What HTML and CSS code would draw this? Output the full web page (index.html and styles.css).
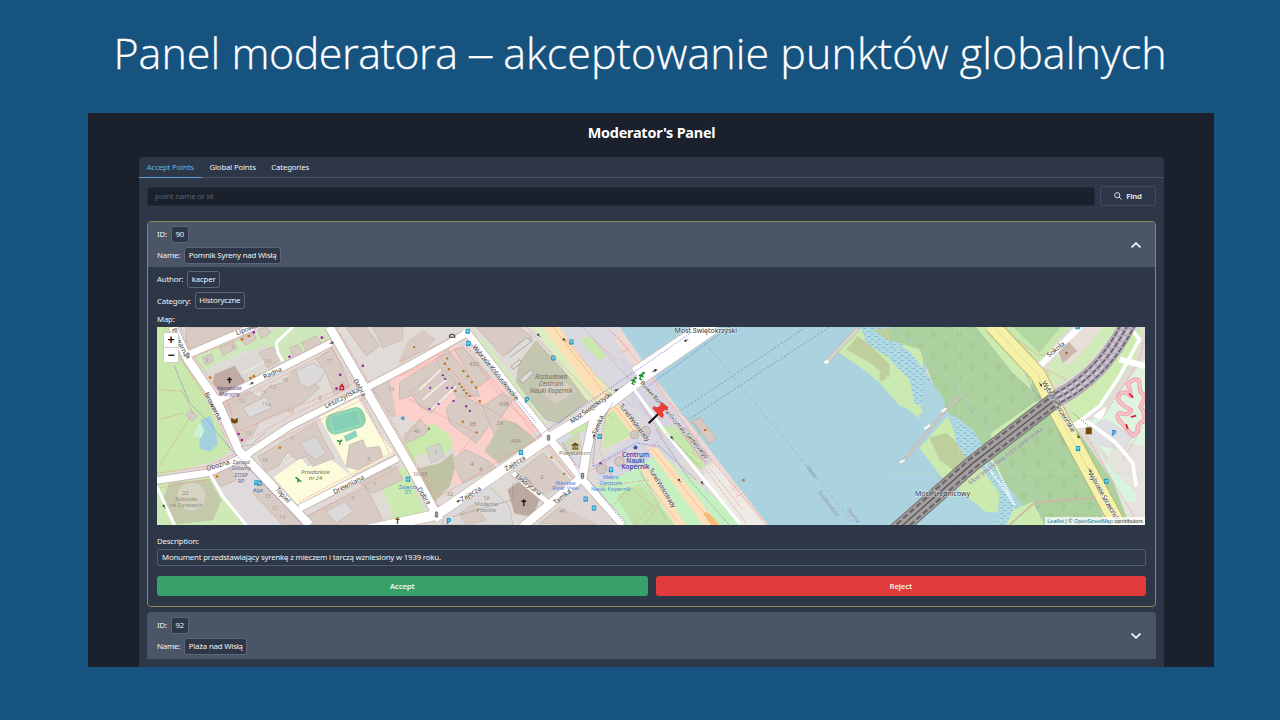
FILE: index.html
```html
<!DOCTYPE html>
<html lang="pl">
<head>
<meta charset="utf-8">
<title>Panel moderatora</title>
<link rel="stylesheet" href="styles.css">
</head>
<body>
<main class="slide">
  <h1 class="slide-title">Panel <span class="tight">moderatora</span><span class="dash">–</span>akceptowanie punktów globalnych</h1>
  <section class="app">
    <h2 class="app-title">Moderator's Panel</h2>
    <div class="card">
      <nav class="tabs">
        <a class="tab tab-active">Accept Points</a>
        <a class="tab">Global Points</a>
        <a class="tab">Categories</a>
      </nav>
      <div class="search">
        <div class="search-input">point name or id</div>
        <div class="search-btn">
          <svg width="8" height="8" viewBox="0 0 16 16" fill="none" stroke="#edf2f7" stroke-width="1.8"><circle cx="6.5" cy="6.5" r="5.2"/><path d="M10.3 10.3L15.3 15.3"/></svg>
          Find
        </div>
      </div>
      <article class="item item-open">
        <header class="item-head">
          <div class="fields">
            <div class="field"><span class="label">ID:</span><span class="tag">90</span></div>
            <div class="field"><span class="label">Name:</span><span class="tag">Pomnik Syreny nad Wisłą</span></div>
          </div>
          <svg class="chev" width="10" height="6" viewBox="0 0 10 6" fill="none" stroke="#fff" stroke-width="1.6"><path d="M.6 5.3L5 1.2L9.4 5.3"/></svg>
        </header>
        <div class="item-body">
          <div class="field"><span class="label label-up">Author:</span><span class="tag">kacper</span></div>
          <div class="field"><span class="label">Category:</span><span class="tag">Historyczne</span></div>
          <div class="map-label label">Map:</div>
          <div class="map">
            <svg class="map-svg" viewBox="22.5 23 2964 592" preserveAspectRatio="none">
              <defs>
                <pattern id="trees" width="78" height="64" patternUnits="userSpaceOnUse"><path d="M14 18a6 7 0 1 1 .1 0v9M54 50a6 7 0 1 1 .1 0v9" fill="none" stroke="#8dbb80" stroke-width="2"/></pattern>
                <pattern id="reeds" width="22" height="16" patternUnits="userSpaceOnUse"><rect width="22" height="16" fill="#b4dbe0"/><path d="M1 4h11M11 12h10" stroke="#6cb2de" stroke-width="2.5"/></pattern>
                <g id="bus"><rect width="13" height="15" rx="2" fill="#0c92c4"/><path d="M3 4h7v4H3zM4 11h5" stroke="#fff" stroke-width="1.5" fill="none"/></g>
                <g id="gate"><rect x="-5" y="-9" width="10" height="18" rx="4" fill="#777"/><path d="M-2-4h4M-2 0h4M-2 4h4" stroke="#ddd" stroke-width="2"/></g>
                <path id="arr" d="M-7 0H5M1-3L6 0L1 3z" stroke="#444" stroke-width="2" fill="#444"/>
              </defs>
              <rect x="0" y="0" width="3010" height="640" fill="#e1dbd8"/>

              <!-- west land use -->
              <g>
                <path d="M22 23H65L125 145L245 395L190 425L22 470Z" fill="#c8e8ae"/>
                <path d="M22 480L175 462L290 615H22Z" fill="#cde9b6"/>
                <path d="M60 490L178 478L215 540L190 600L80 612L40 540Z" fill="#c4c9aa" stroke="#b9b89d"/>
                <circle cx="125" cy="530" r="44" fill="#d5d3c2" stroke="#bcb9a5"/>
                <path d="M135 110L300 45L420 23H525L540 60L395 128L300 90L160 155Z" fill="#cfe8bb"/>
                <path d="M240 135L350 75L400 125L360 150L240 205L175 165Z" fill="#dcd8d3"/>
                <path d="M150 385C148 350 166 322 152 302L182 288Q202 330 204 375L180 396Z" fill="#a4cfdc"/>
                <path d="M130 350L150 310L165 330L155 355Z" fill="#ccf0d8"/>
                <path d="M110 285L125 273L142 289L127 305Z" fill="#d6cfd2" stroke="#b5a8b0" stroke-width="2"/>
                <path d="M510 292L625 235L690 345L735 400L605 468Z" fill="#fcfbdc"/>
                <path d="M372 472L455 415L475 440L535 415L560 430L610 470L448 558Z" fill="#fcfbdc"/>
                <path d="M690 482L780 432L810 600L740 615Z" fill="#cdebb0"/>
                <path d="M180 470L290 420L480 615H290Z" fill="#dfdbdd"/>
                <g fill="none" stroke="#fff" stroke-width="2" opacity=".9"><path d="M260 170L340 130L360 90M210 280L440 170M240 320L480 220M380 390L410 430L460 400"/></g>
                <g fill="#d7cbc3" stroke="#bfb2a9" stroke-width="2">
                  <path d="M110 23L110 80L125 95L270 35L265 23Z"/>
                  <path d="M210 85L250 65L262 85L222 108ZM275 55L310 38L320 60L286 78ZM325 30L350 23L365 40L335 58Z"/>
                  <path d="M420 85L445 75L460 100L432 115ZM455 70L500 50L515 72L470 95Z"/>
                  <path d="M160 115L185 103L193 125L170 137ZM330 100L370 82L395 120L355 145Z"/>
                  <path d="M195 165L255 140L285 185L280 210L215 225L190 190Z" fill="#c0aca3"/>
                  <path d="M215 250L300 215L330 235L360 200L400 190L435 150L480 180L510 205L460 250L330 305L310 345L280 365L250 320Z"/>
                  <path d="M440 155L490 130L530 150L510 185L475 205L450 190Z" fill="#dbd9da"/>
                  <path d="M500 120L550 85L590 170L600 200L555 225L525 150Z"/>
                  <path d="M280 265L350 230L365 265L300 295Z" fill="#dddadb"/>
                  <path d="M325 410L370 385L400 365L500 310L525 365L555 415L490 440L470 410L440 420L415 395L385 440L350 455Z"/>
                  <path d="M450 370L500 350L530 400L500 420L470 400Z" fill="#d7d6d6"/>
                  <path d="M600 375L640 360L650 385L690 380L700 410L625 450L590 440Z"/>
                  <path d="M590 25L650 23L690 80L650 110ZM670 23H760V60L700 85Z"/>
                  <path d="M660 195L760 150L810 240L780 285L725 290Z"/>
                  <path d="M185 460L240 440L260 480L215 500ZM330 490L360 480L480 615H400L310 520Z"/>
                  <path d="M470 590L650 500L700 600L680 615H480ZM630 490L700 450L740 440L760 480L670 520Z"/>
                  <path d="M530 575L585 545L610 575L560 610Z" fill="#dbd9da"/>
                </g>
                <g transform="rotate(-16 587 303)"><rect x="528" y="272" width="120" height="64" rx="26" fill="#8fd0ab"/><rect x="545" y="280" width="86" height="48" fill="#85cfb4" stroke="#a8dfcc" stroke-width="2"/></g>
                <path d="M583 350L618 332L625 350L590 366Z" fill="#8bd3b8"/>
              </g>

              <!-- science centre quarter -->
              <g transform="translate(750 0)">
                <path d="M-30 170L145 85L180 75L260 175L300 180L340 235L410 330L370 380L255 395L300 430L160 500L150 455L180 425L150 360L60 310L-10 290Z" fill="#fbcfca"/>
                <path d="M10 360L100 310L150 345L160 380L120 420L60 400L40 440Z" fill="#cae9ad"/>
                <path d="M0 120L25 65L70 30L110 60L80 90L0 135Z" fill="#d7cbc3"/>
                <path d="M-10 490L40 500L85 590L0 612H-30Z" fill="#cbeaae"/>
                <g fill="#d7cbc3" stroke="#bfb2a9" stroke-width="2">
                  <path d="M0 190L60 150L130 115L160 150L100 180L30 230L0 240Z"/>
                  <path d="M110 120L145 90L220 180L240 230L170 230Z"/><path d="M165 90L190 85L275 175L230 205Z"/>
                  <path d="M30 215L130 150L170 190L95 280L60 260Z"/><path d="M140 265L185 225L260 265L275 310L230 370L150 310Z"/>
                  <path d="M15 345L60 300L90 325L75 345L20 370Z"/><path d="M150 425L200 390L270 425L290 445L190 490L170 450Z"/>
                  <path d="M250 260L310 220L340 240L300 300L340 330L330 350L290 360Z"/>
                  <path d="M230 23H360L400 55L310 110Z"/><path d="M350 460L430 400L520 490L460 545Z"/>
                  <path d="M120 560L260 490L330 560L340 615H130Z" fill="#dbd9d9"/>
                  <path d="M325 510L380 470L425 525L400 590L345 580Z" fill="#bba99f"/>
                  <path d="M420 610L520 530L590 615Z"/><path d="M180 580L220 555L260 600L200 615Z"/>
                </g>
                <path d="M40 450L120 430L160 400L165 450L150 500L100 550Z" fill="#bfc3a4"/>
                <path d="M80 385L120 370L135 410L95 430Z" fill="#d4d2cc" stroke="#aaa"/>
                <path d="M360 130L410 65L570 240L480 310L440 300L350 195Z" fill="#c5c6af" stroke="#afb09a" stroke-width="2"/>
                <path d="M255 395L310 300L350 310L410 360L300 432Z" fill="#c5c6af"/>
                <path d="M415 210L440 185L500 190L530 215L470 255Z" fill="#d5cdc2"/>
                <path d="M220 55L255 60L440 310L420 330L330 215L250 110Z" fill="#d3eabf"/>
                <path d="M490 23H640L780 160V330L560 240Z" fill="#dbd9e0"/>
                <path d="M400 23H460L650 230L640 265L560 240Z" fill="#dcedc0"/>
                <path d="M430 23H478L720 345L690 380Z" fill="#fae0b4"/>
                <path d="M540 60L570 50L620 110L600 125Z" fill="#c8e8ad"/>
                <path d="M460 350L600 270L570 400L545 440Z" fill="#d8dce6"/>
                <path d="M500 340L590 285L590 310L530 350Z" fill="#c8e8ad"/>
                <path d="M485 370L540 335L550 400L500 400Z" fill="#d3d5bd"/>
                <path d="M615 290L660 260L710 340L610 390Z" fill="#c8e8ad"/>
                <path d="M580 440L720 330L840 250L870 400L780 460L600 500Z" fill="#d8d6e1"/>
                <path d="M625 250L665 260L720 335L700 350Z" fill="#fae0b4"/>
                <path d="M560 510L680 460L780 400L1050 615H660Z" fill="#c4f0c2"/>
                <path d="M650 530L720 490L830 615H700Z" fill="#c1e3aa"/>
                <path d="M420 530L540 480L650 615H600Z" fill="#ded6d4"/>
                <path d="M320 105L380 55L398 65L330 115M335 140L360 120L365 130L340 150ZM360 180L395 150L403 160L370 192Z" fill="#dcdcd8" stroke="#9b8f89" stroke-width="2"/>
                <g stroke="#f5f0ec" stroke-width="5" fill="none"><path d="M60 210L125 150M70 240L140 180M95 270L170 200"/></g>
                <g fill="#d3c7c2" stroke="#a99ea3" stroke-width="2"><circle cx="660" cy="425" r="14"/><circle cx="705" cy="345" r="12"/><circle cx="738" cy="335" r="15"/><circle cx="606" cy="447" r="15"/></g>
              </g>

              <!-- river and east bank -->
              <g transform="translate(1470 0)">
                <path d="M-60 23H860V615H385L50 180Z" fill="#aad3df"/>
                <path d="M640 200H1050V615H380V500Z" fill="#aad3df"/>
                <path d="M-60 23L-75 60L30 210L215 430L370 615H385L40 178Z" fill="#efd9d4"/>
                <path d="M-60 110L20 160L220 420L190 440L60 330L-20 260Z" fill="#d6d4e0"/>
                <path d="M50 320L110 320L200 440L175 445Z" fill="#c6e8ac"/>
                <path d="M120 330L140 325L205 410L190 420Z" fill="#d9cdc8" stroke="#b9adb0" stroke-width="2"/>
                <path d="M200 435L225 430L375 615H300L190 480Z" fill="#eeeae6"/>
                <path d="M160 305L182 293L230 355L208 372Z" fill="#d7c9c1" stroke="#b8aaa2" stroke-width="2"/>
                <path d="M20 380L55 385L240 615H190Z" fill="#fce0b8"/>
                <path d="M0 440L30 445L140 615H105Z" fill="#fce0b8"/>
                <path d="M190 580Q205 565 240 615H215Z" fill="#f8bd70"/>
                <path d="M650 30L785 23H850V285L780 258L720 190Q650 130 585 92Z" fill="#cbeab1"/>
                <path d="M665 25H760L790 60V105L740 110L680 70Z" fill="url(#reeds)"/>
                <path d="M620 90L655 50L700 85L745 130L780 150L750 175L690 130ZM720 160L740 150L740 180L720 185ZM700 30L790 23V70L740 60Z" fill="#becf9d"/>
                <path d="M553 128L650 25L660 30L565 132Z" fill="#d9d3ce" stroke="#bdb3ad" stroke-width="2"/><path d="M552 128L562 121L570 127L560 134Z" fill="#fff"/>
                <g fill="none" stroke-dasharray="7 5"><path d="M500 23L125 272M570 23L150 297" stroke="#98a4a0" stroke-width="3"/><path d="M175 45L640 605" stroke="#8fb4c6" stroke-width="2" stroke-dasharray="16 8"/></g>
                <path d="M200 23V615M0 460H780M500 23V300" stroke="#b8dae4" stroke-width="1"/>
              </g>
              <g transform="translate(2220 0)">
                <path d="M0 23H300L500 240L760 615H350L300 430L190 290L160 265L90 90L0 60Z" fill="#add19e"/>
                <path d="M0 23H300L500 240L350 370L190 290L90 90L0 60ZM340 400L500 270L680 615H430Z" fill="url(#trees)"/>
                <path d="M0 75L55 90L165 240L165 262L185 290L90 385L100 290L75 160Z" fill="#acd5df"/>
                <path d="M0 100Q90 150 95 220L88 296L0 225Z" fill="#cbeab1"/>
                <path d="M0 78L60 95L125 180L100 190L100 260L75 250L60 180L0 120Z" fill="url(#reeds)"/>
                <path d="M185 285L215 300L285 400L300 430L400 555L360 615H20L160 470L90 385Z" fill="#acd5df"/>
                <path d="M175 290L195 340L250 410L330 520L325 575Q290 585 270 560L155 470L90 385Z" fill="#cdeaae"/>
                <path d="M120 355L170 340L200 365L240 430L190 450L150 420Z" fill="#bfce9d"/>
                <path d="M190 290L250 330L285 385L240 430L200 370ZM280 440L300 430L380 550L350 615H320L335 520Z" fill="url(#reeds)"/>
                <path d="M305 340L440 245L470 250L370 330L305 370Z" fill="#cdebb0"/>
                <path d="M260 23H315L430 150L425 210L370 160Z" fill="#cdebb0"/>
                <path d="M350 615L370 570L430 545L465 615Z" fill="#cdebb0"/>
                <path d="M315 23H540L450 130Z" fill="#c9e8b0"/><path d="M370 23H515L450 100Z" fill="#b2d8a2"/>
                <path d="M540 50L620 23H690L580 150L500 200L465 160Z" fill="#d1eab9"/>
                <path d="M550 23H640L600 75L535 140L500 105Z" fill="#e8dfd9"/><path d="M505 90L535 65L562 95L520 130Z" fill="#c9b8ae" stroke="#b7a69d"/>
                <path d="M520 220L690 60L760 23L740 110L640 260L550 310Z" fill="#ceebb1"/>
                <path d="M650 270L770 110V450L740 510L580 320Z" fill="#def4e0"/>
                <path d="M680 360L770 380V615H720L650 430Z" fill="#e6e2dc"/><path d="M590 325L650 300L730 350L700 390L630 375Z" fill="#dfdfe3" stroke="#bbb"/>
                <path d="M590 320L650 430L740 520V545H700Z" fill="#d8f3df"/>
                <path d="M605 495L620 490L700 615H650Z" fill="#d7d6e3"/><path d="M610 290L650 260L640 300Z" fill="#fff"/>
                <path d="M210 23V615M0 460H760" stroke="#c4ddbb" stroke-width="1"/>
                <path d="M0 23L80 75L220 230L300 340L305 365L350 430L430 520L465 615" fill="none" stroke="#a9c9d6" stroke-width="4" stroke-dasharray="5 4"/>
                <g fill="none"><path d="M38 427L170 270L215 228" stroke="#bfb2ab" stroke-width="8"/><path d="M38 427L170 270L215 228" stroke="#d9cfca" stroke-width="4"/></g>
                <path d="M33 427L43 423M158 275L168 268M107 326L120 317" stroke="#fff" stroke-width="6" stroke-linecap="round"/>
                <path d="M360 615L435 548L650 530" fill="none" stroke="#cdb6a6" stroke-width="5"/>
                <path d="M285 395L320 440L375 555L345 510L290 435" fill="none" stroke="#fff" stroke-width="6" stroke-dasharray="4 3"/>
                <path d="M730 348L698 312Q675 292 690 280Q720 290 725 272Q705 262 688 245Q680 215 712 220L722 228Q725 210 715 195Q730 175 748 182L752 215Q765 225 764 240L752 262Q770 280 762 305Q740 315 745 335Z" fill="none" stroke="#f3a6b2" stroke-width="13" stroke-linejoin="round"/>
                <path d="M730 348L698 312Q675 292 690 280Q720 290 725 272Q705 262 688 245Q680 215 712 220L722 228Q725 210 715 195Q730 175 748 182L752 215Q765 225 764 240L752 262Q770 280 762 305Q740 315 745 335Z" fill="none" stroke="#f8c4cc" stroke-width="6" stroke-linejoin="round"/>
              </g>

              <!-- streets: casing then fill -->
              <g fill="none" stroke="#c9b9b2" stroke-linejoin="round">
                <path d="M70 23L115 120L205 250L270 395L480 615M540 23L640 195L780 435L870 600" stroke-width="31"/>
                <path d="M22 482L180 458L280 412L420 320L650 205L790 132L945 45M105 110L310 23M190 250L545 70M450 565L745 415" stroke-width="26"/>
                <path d="M650 630L860 585L1030 470L1190 360L1380 250L1500 160L1700 23" stroke-width="34"/>
                <path d="M1460 165L1690 10" stroke-width="50"/>
                <path d="M945 30L1195 350L1300 480L1420 615" stroke-width="27"/><path d="M1380 245L1330 310L1310 400L1300 470L1120 620" stroke-width="30"/><path d="M1090 460L1210 560" stroke-width="20"/>
              </g>
              <g fill="none" stroke="#f08c83" stroke-width="2.2" stroke-dasharray="5 4">
                <path d="M92 23L140 120L235 250L275 365M45 23L100 130L190 265L245 395M22 460L170 440L260 400M22 505L185 478M230 350L640 180M300 400L660 230M450 545L735 395M470 590L750 440M560 23L660 190L800 430L880 580M520 50L620 200L720 400M30 210L100 215L130 280L60 390L30 440M100 280L30 300M120 115L310 45M200 275L540 95M280 370L420 290L600 205"/>
                <g transform="translate(750 0)"><path d="M0 170L190 80L320 250L430 345L120 530L0 380M0 125L150 60M200 80L430 375L545 500M30 240L230 340L180 400M70 290L0 380M110 100L240 250L400 350M380 23L540 190L640 300M460 23L700 330M500 60L590 170L700 260M550 23L690 180M580 60L650 120M430 360L530 490M560 460L680 390L720 450L800 600M600 500L750 480M640 560L690 500L760 560L700 615M620 280L600 390L640 480M720 250L790 350L690 450M640 40L780 200M620 23L690 90L660 100"/></g>
                <g transform="translate(1470 0)"><path d="M40 180L215 420L370 600M10 190L150 370L310 570M40 390L210 600M0 460L110 600M0 480L60 550L20 610M200 450L320 610M270 500L300 530M90 250L180 330L160 400L220 440M290 530L310 520M280 510L290 495"/></g>
                <g transform="translate(2220 0)"><path d="M530 180L470 150L480 170M700 420L760 320M630 310L745 130L765 60M330 23L450 110L500 90L560 23M590 350L740 600"/></g>
              </g>
              <g fill="none" stroke="#fff" stroke-linejoin="round">
                <path d="M70 23L115 120L205 250L270 395L480 615M540 23L640 195L780 435L870 600" stroke-width="25"/>
                <path d="M22 482L180 458L280 412L420 320L650 205L790 132L945 45M105 110L310 23M190 250L545 70M450 565L745 415" stroke-width="20"/>
                <path d="M650 630L860 585L1030 470L1190 360L1380 250L1500 160L1700 23" stroke-width="30"/>
                <path d="M1460 165L1690 10" stroke-width="46"/>
                <path d="M945 30L1195 350L1300 480L1420 615" stroke-width="22"/><path d="M1380 245L1330 310L1310 400L1300 470L1120 620" stroke-width="25"/><path d="M1090 460L1210 560" stroke-width="15"/>
                <path d="M22 500L75 615M180 460L220 530L290 615M380 70L385 100L400 125M1440 190L1550 340L1680 500L1770 610M380 70L430 23" stroke-width="9"/>
                <path d="M2940 23L2970 60L2910 170L2850 260L2770 320M2820 310L2900 370L2950 430L2960 500" stroke-width="11"/><path d="M2670 140L2790 23M2770 320L2820 310M2910 120L2990 140" stroke-width="18"/>
              </g>
              <g fill="none" stroke="#7776cd" stroke-width="2.6" stroke-dasharray="4 4">
                <path d="M75 140L120 250L180 310L245 390L350 500L430 580L460 615M955 60L1160 310M1165 350L1480 140L1650 23M1495 200L1740 23M1240 370L1300 480M1325 490L1350 520L1430 615M1390 250L1340 330L1330 440L1460 370L1530 380L1640 480"/>
                <path d="M2515 23L2620 140L2650 210L2700 270L2740 360L2860 540M2770 280L2830 330"/>
              </g>
              <g fill="none" stroke="#8b8481" stroke-width="2.5" stroke-dasharray="3 3"><path d="M1520 330L1620 480L1740 615M1550 340L1660 450M910 590L1090 540L1090 490M275 380L305 375L350 335"/></g>
              <g fill="none"><path d="M2525 15L2665 165L2720 270L2920 640" stroke="#b6b076" stroke-width="49"/><path d="M2525 15L2665 165L2720 270L2920 640" stroke="#f5f2a8" stroke-width="44"/><path d="M2525 15L2665 165L2720 270L2920 640" stroke="#d7d191" stroke-width="2"/></g>
              <g fill="none">
                <path d="M2232 640L2470 430L2725 235C2810 190 2880 125 2938 10" stroke="#77706f" stroke-width="50"/>
                <path d="M2232 640L2470 430L2725 235C2810 190 2880 125 2938 10" stroke="#a39e9f" stroke-width="44"/>
                <path d="M2242 650L2480 441L2735 246M2222 630L2460 419L2715 224" stroke="#6b6869" stroke-width="7" stroke-dasharray="18 8"/>
                <path d="M2232 640L2470 430L2725 235" stroke="#5a5757" stroke-width="4"/>
                <path d="M2725 235C2810 190 2880 125 2938 10" stroke="#b8aebb" stroke-width="50"/>
                <path d="M2716 222C2798 178 2865 115 2920 5M2725 235C2810 190 2880 125 2938 10M2734 248C2822 202 2897 135 2957 15" stroke="#6a6270" stroke-width="5" stroke-dasharray="16 5"/>
                <path d="M2721 228C2804 184 2872 120 2929 8M2730 241C2816 196 2888 130 2948 12" stroke="#e6dde8" stroke-width="3" stroke-dasharray="14 8"/>
              </g>

              <!-- small marks -->
              <g fill="#c9740b"><circle cx="298" cy="50" r="4"/><circle cx="277" cy="60" r="4"/><circle cx="182" cy="174" r="4"/><circle cx="303" cy="176" r="4"/><circle cx="313" cy="170" r="4"/><circle cx="391" cy="384" r="4"/><circle cx="203" cy="470" r="4"/></g>
              <g fill="#a021a0"><circle cx="313" cy="39" r="4"/><circle cx="420" cy="112" r="4"/><circle cx="517" cy="55" r="4"/><circle cx="640" cy="139" r="4"/><circle cx="572" cy="166" r="4"/><circle cx="561" cy="207" r="4"/><circle cx="267" cy="343" r="4"/><circle cx="277" cy="361" r="4"/></g>
              <g transform="translate(750 0)"><g fill="#b57420"><circle cx="143" cy="117" r="3.5"/><circle cx="136" cy="133" r="3.5"/><circle cx="148" cy="149" r="3.5"/><circle cx="192" cy="155" r="3.5"/><circle cx="205" cy="171" r="3.5"/><circle cx="180" cy="193" r="3.5"/><circle cx="187" cy="202" r="3.5"/><circle cx="193" cy="211" r="3.5"/><circle cx="201" cy="221" r="3.5"/><circle cx="211" cy="229" r="3.5"/><circle cx="217" cy="188" r="3.5"/><circle cx="230" cy="204" r="3.5"/><circle cx="241" cy="245" r="3.5"/><circle cx="190" cy="306" r="3.5"/><circle cx="232" cy="338" r="3.5"/><circle cx="88" cy="327" r="3.5"/><circle cx="168" cy="214" r="3.5"/><circle cx="44" cy="83" r="3.5"/><circle cx="456" cy="413" r="3.5"/><circle cx="494" cy="462" r="3.5"/></g>
              <g fill="#8e31b1"><circle cx="130" cy="167" r="3.5"/><circle cx="137" cy="178" r="3.5"/><circle cx="92" cy="205" r="3.5"/><circle cx="143" cy="205" r="3.5"/><circle cx="158" cy="205" r="3.5"/><circle cx="162" cy="244" r="3.5"/><circle cx="117" cy="253" r="3.5"/><circle cx="90" cy="268" r="3.5"/><circle cx="200" cy="260" r="3.5"/><circle cx="211" cy="274" r="3.5"/><circle cx="603" cy="430" r="3.5"/></g>
              <circle cx="10" cy="296" r="6" fill="#5b9bd8"/><circle cx="708" cy="383" r="6" fill="#3b55a0"/>
              <use href="#bus" x="198" y="28"/><use href="#bus" x="200" y="65"/><use href="#bus" x="509" y="60"/><use href="#bus" x="455" y="108"/><use href="#bus" x="358" y="391"/><use href="#bus" x="594" y="343"/><use href="#bus" x="628" y="442"/><use href="#bus" x="552" y="530"/><use href="#bus" x="577" y="557"/><use href="#bus" x="19" y="471"/>
              <use href="#gate" x="447" y="354"/><use href="#gate" x="549" y="468"/><use href="#gate" x="111" y="584"/>
              <use href="#arr" transform="translate(178 543) rotate(155)"/><use href="#arr" transform="translate(652 211) rotate(155)"/><use href="#arr" transform="translate(766 153) rotate(-25)"/><use href="#arr" transform="translate(583 350) rotate(-80)"/><use href="#arr" transform="translate(860 63) rotate(155)"/><use href="#arr" transform="translate(495 62) rotate(225)"/><use href="#arr" transform="translate(418 48) rotate(225)"/>
              <path d="M373 538V558M366 544H380" stroke="#111" stroke-width="4"/>
              <path d="M518 376L527 370L536 376ZM518 388H537M521 377V387M527 377V387M533 377V387" fill="#734a08" stroke="#734a08" stroke-width="3"/>
              <path d="M150 52a8 7 0 0 1 16 0M148 54h20" stroke="#444" stroke-width="3" fill="none"/>
              <g stroke="#178a24" stroke-width="4" fill="none"><path d="M695 183L703 180L708 190M703 182L698 192L705 195M718 169L727 164L731 174M726 167L721 178L728 182"/><circle cx="708" cy="176" r="2"/><circle cx="732" cy="161" r="2"/></g></g>
              <use href="#gate" x="115" y="108"/><use href="#bus" x="314" y="481"/><use href="#bus" x="324" y="483"/>
              <use href="#arr" transform="translate(306 192) rotate(-25)"/><use href="#arr" transform="translate(546 71) rotate(-20)"/><use href="#arr" transform="translate(44 560) rotate(240)"/>
              <path d="M240 173V191M233 180H247" stroke="#111" stroke-width="4"/><path d="M245 294L255 300L265 294V308L255 312L245 308Z" fill="#734a08"/><path d="M744 592V612M738 598H750" stroke="#734a08" stroke-width="4"/>
              <path d="M570 199H584V212H570ZM574 193H580V199H574Z" fill="#c31a2d"/><path d="M577 202V209M573.5 205.5H580.5" stroke="#fff" stroke-width="2"/>
              <path d="M563 362L572 366L570 375M572 366L578 360M438 472L446 478L445 488M446 478L455 486" stroke="#178a24" stroke-width="4" fill="none"/>
              <g transform="translate(2220 0)"><use href="#bus" x="558" y="15"/><use href="#bus" x="559" y="379"/><use href="#bus" x="644" y="477"/><path d="M590 325H605V340H590ZM588 342H607" fill="#734a08" stroke="#734a08" stroke-width="3"/><use href="#arr" transform="translate(453 195) rotate(60)"/><use href="#arr" transform="translate(566 350) rotate(60)"/><use href="#arr" transform="translate(602 452) rotate(60)"/><circle cx="531" cy="101" r="4" fill="#b5682a"/><path d="M719 222L731 234M724 292L740 288M710 314L715 328" stroke="#d31728" stroke-width="5"/></g>
              <use href="#arr" transform="translate(1515 154) rotate(-30)"/><use href="#arr" transform="translate(1568 355) rotate(230)"/><use href="#arr" transform="translate(1590 482) rotate(230)"/><use href="#arr" transform="translate(1659 490) rotate(230)"/><circle cx="1782" cy="481" r="4" fill="#8f8763"/><circle cx="1667" cy="331" r="4" fill="#c1781a"/>

              <!-- labels -->
              <g class="street" text-anchor="middle">
                <text transform="translate(86 72) rotate(65)">Browarna</text><text transform="translate(185 263) rotate(62)">Browarna</text>
                <text transform="translate(293 36) rotate(-20)">Lipowa</text><text transform="translate(372 167) rotate(-25)">Radna</text>
                <text transform="translate(580 241) rotate(-27)">Leszczyńska</text><text transform="translate(625 208) rotate(60)">Dobra</text>
                <text transform="translate(207 443) rotate(-17)">Oboźna</text><text transform="translate(395 530) rotate(48)">Topiel</text><text transform="translate(600 500) rotate(-27)">Drewniana</text>
                <g transform="translate(750 0)">
                  <text transform="translate(284 164) rotate(51)" textLength="208">Wybrzeże Kościuszkowskie</text><text transform="translate(578 270) rotate(-35)" textLength="148">Most Świętokrzyski</text>
                  <text transform="translate(602 318) rotate(-68)">Tamka</text><text transform="translate(350 436) rotate(-32)">Zajęcza</text><text transform="translate(217 528) rotate(-32)">Zajęcza</text>
                  <text transform="translate(383 500) rotate(37)" textLength="92">Elektryczna</text><text transform="translate(492 536) rotate(-38)">Tamka</text><text transform="translate(68 532) rotate(55)">Dobra</text>
                  <text transform="translate(700 313) rotate(52)" textLength="136">Tunel Wisłostrady</text>
                </g>
                <g transform="translate(1470 0)"><text x="199" y="42" class="big">Most Świętokrzyski</text><text transform="translate(100 304) rotate(49)" textLength="300" class="small">Bulwar Bohdana Grzymały-Siedleckiego</text><text transform="translate(63 508) rotate(58)" textLength="136">Tunel Wisłostrady</text></g>
                <g transform="translate(2220 0)"><text x="159" y="528" class="big">Most średnicowy</text><text transform="translate(503 95) rotate(-38)">Sokola</text><text transform="translate(502 265) rotate(59)" textLength="175">Wybrzeże Szczecińskie</text><text transform="translate(640 537) rotate(60)" textLength="178">Wybrzeże Szczecińskie</text><text transform="translate(352 413) rotate(-37)" textLength="275" class="faint">Most średnicowy, część podmiejska</text></g>
              </g>
              <g class="place" text-anchor="middle">
                <g fill="#5b3f7d"><text x="240" y="212">Apostolat</text><text x="240" y="230">Maryjny</text></g>
                <g fill="#6a6270"><text x="275" y="432">Zarząd</text><text x="275" y="451">Główny</text><text x="275" y="471">ZOSP</text><text x="275" y="490">RP</text></g>
                <g fill="#8d8d78"><text x="108" y="525">22</text><text x="110" y="542">Rotunda</text><text x="110" y="560">na Dynasach</text></g>
                <g fill="#6f6f47" font-style="italic"><text x="498" y="462">Przedszkole</text><text x="498" y="480">nr 24</text></g>
                <text x="325" y="516" fill="#2d78c8">Aga</text>
                <g fill="#aa9e96"><text x="173" y="129">9</text><text x="250" y="88">7</text><text x="357" y="132">10</text><text x="276" y="250">12</text><text x="340" y="222">15</text><text x="369" y="207">13</text><text x="406" y="188">18</text><text x="350" y="258">15a</text><text x="423" y="280">10</text><text x="511" y="240">8</text><text x="296" y="345">12</text><text x="428" y="362">1</text><text x="346" y="428">16</text><text x="658" y="425">8</text><text x="355" y="535">23</text><text x="377" y="570">21</text><text x="398" y="597">19</text><text x="610" y="540">9</text><text x="675" y="498">7</text><text x="726" y="215">16</text><text x="541" y="132">17</text></g>
                <g transform="translate(750 0)">
                  <g fill="#6e6e60" font-style="italic" class="mid"><text x="455" y="177">Rozbudowa</text><text x="455" y="198">Centrum</text><text x="455" y="219">Nauki Kopernik</text></g>
                  <text x="526" y="406" fill="#8a7a4e">Planetarium</text>
                  <g fill="#4746a8" class="mid bold"><text x="708" y="411">Centrum</text><text x="708" y="430">Nauki</text><text x="708" y="449">Kopernik</text></g>
                  <g fill="#4a84dd"><text x="634" y="478">Metro</text><text x="634" y="496">Centrum</text><text x="634" y="514">Nauki Kopernik</text><text x="498" y="494">Warsaw</text><text x="498" y="511">River View</text><text x="26" y="506">Zajęcza</text><text x="26" y="523">01</text></g>
                  <g fill="#948980"><text x="261" y="541">1A</text><text x="260" y="558">Moderna</text><text x="260" y="575">Powiśle</text><text x="52" y="341">40</text><text x="219" y="318">2B</text><text x="301" y="316">2A</text><text x="313" y="258">43B</text><text x="225" y="139">43C</text><text x="349" y="371">43A</text><text x="218" y="440">4</text><text x="244" y="453">4</text><text x="428" y="478">2</text><text x="490" y="579">41</text><text x="152" y="527">32</text><text x="109" y="403">1</text><text x="62" y="470">36/38</text></g>
                  <text x="382" y="251" fill="#0a92da" class="park">P</text><text x="147" y="613" fill="#0a92da" class="park">P</text>
                </g>
                <text x="2893" y="350" fill="#0a92da" class="park">P</text>
                <g fill="#8892b8"><text transform="translate(1982 460) rotate(52)">Wisła</text><text transform="translate(2033 555) rotate(52)" fill="#a18db4">Śródmieście</text><text transform="translate(2108 590) rotate(52)" fill="#a18db4">Skarpa</text></g>
              </g>
              <path d="M1499 309L1526 283" stroke="#111" stroke-width="6" stroke-linecap="round"/>
              <path d="M1537 247L1557 264L1553 273L1546 270L1539 278L1543 286L1540 295L1533 292L1509 267L1511 260L1524 263L1534 257L1533 250Z" fill="#eb3c35"/>
            </svg>
            <div class="zoom"><span>+</span><span>−</span></div>
            <div class="credit"><a>Leaflet</a> | © <a>OpenStreetMap</a> contributors</div>
          </div>
          <div class="label desc-label">Description:</div>
          <div class="desc">Monument przedstawiający syrenkę z mieczem i tarczą wzniesiony w 1939 roku.</div>
          <div class="actions"><div class="btn btn-accept">Accept</div><div class="btn btn-reject">Reject</div></div>
        </div>
      </article>
      <article class="item">
        <header class="item-head">
          <div class="fields">
            <div class="field"><span class="label">ID:</span><span class="tag">92</span></div>
            <div class="field"><span class="label">Name:</span><span class="tag">Plaża nad Wisłą</span></div>
          </div>
          <svg class="chev" width="10" height="6" viewBox="0 0 10 6" fill="none" stroke="#fff" stroke-width="1.6"><path d="M.6 .7L5 4.8L9.4 .7"/></svg>
        </header>
      </article>
    </div>
  </section>
</main>
</body>
</html>
```
FILE: styles.css
```css
* { box-sizing: border-box; }
body { margin: 0; background: #17537f; }
.slide { width: 1280px; height: 720px; overflow: hidden; display: flex; flex-direction: column; font-family: "Noto Sans", "Open Sans", sans-serif; color: #f0f3f7; font-size: 7.8px; line-height: 10px; letter-spacing: -0.17px; }
.slide-title { margin: 0; height: 113px; padding-top: 23px; text-align: center; font: 300 43px/60px "Open Sans", sans-serif; letter-spacing: 0.05px; color: #fff; -webkit-text-stroke: .3px #fff; white-space: nowrap; }
.tight { letter-spacing: -0.5px; }
.dash { display: inline-block; margin: 0 12px 0 12px; transform: scaleX(1.3); }
.app { flex: none; width: 1126px; height: 554px; margin-left: 88px; padding: 0 50px 0 51px; background: #1a202c; overflow: hidden; }
.app-title { margin: 0; height: 44px; text-align: center; font-size: 14.4px; line-height: 40px; font-weight: 700; letter-spacing: -0.22px; color: #fff; }
.card { width: 1025px; height: 510px; background: #2d3748; border-radius: 4px 4px 0 0; }
.tabs { display: flex; height: 21px; border-bottom: 1px solid #4a5568; }
.tab { height: 21px; padding: 0 7.8px; line-height: 21px; white-space: nowrap; }
.tab-active { color: #63b3ed; border-bottom: 1px solid #5a9fd4; }
.search { display: flex; gap: 5px; padding: 8px 8px 0; height: 43px; }
.search-input { width: 948px; height: 19px; margin-top: 1px; padding-left: 7px; line-height: 17px; background: #1a202c; border: 1px solid #232b39; border-radius: 3px; color: #5b6472; }
.search-btn { display: flex; align-items: center; justify-content: center; gap: 4px; flex: 1; height: 20px; border: 1px solid #414c5e; border-radius: 3px; font-weight: 600; }
.item { margin: 0 8px 5px; border-radius: 4px 4px 0 0; overflow: hidden; }
.item-open { height: 386px; border: 1px solid #918654; border-radius: 4px; }
.item-head { display: flex; justify-content: space-between; align-items: center; height: 47px; padding: 0 15.5px 0 10px; background: #4a5568; }
.item-open .item-head { height: 45px; padding: 0 14.5px 0 9px; }
.fields { display: flex; flex-direction: column; gap: 4px; }
.field { display: flex; align-items: center; gap: 4px; height: 17px; }
.tag { height: 17px; padding: 0 3.5px; line-height: 15px; border: 1px solid #5b6678; border-radius: 3px; background: #2d3748; white-space: nowrap; }
.label { white-space: nowrap; }
.label-up { margin-top: -2px; }
.item-body { padding: 4px 9px 0; }
.item-body .field + .field { margin-top: 4px; }
.map-label { height: 18px; padding-top: 5px; }
.map { position: relative; width: 988px; height: 198px; overflow: hidden; }
.map-svg { display: block; width: 100%; height: 100%; }
.street { font: 20px "Noto Sans", sans-serif; letter-spacing: 0; fill: #333; stroke: #fff; stroke-width: 3px; paint-order: stroke; stroke-opacity: .65; }
.street .big { font-size: 21px; }
.street .small { font-size: 18px; }
.street .faint { fill: #8d8796; font-size: 19px; stroke-opacity: .2; }
.place { font: 16.5px "Noto Sans", sans-serif; letter-spacing: 0; }
.place .mid { font-size: 19px; }
.place .bold { font-weight: 600; }
.place .park { font-size: 24px; font-weight: 700; }
.zoom { position: absolute; left: 6px; top: 5px; width: 16px; background: #fff; border: 1px solid #ccc; border-radius: 2px; color: #111; letter-spacing: 0; }
.zoom span { display: block; height: 14px; text-align: center; font: 700 12px/14px "Liberation Sans", sans-serif; }
.zoom span + span { height: 15px; border-top: 1px solid #ccc; }
.credit { position: absolute; right: 0; bottom: 0; height: 8px; padding: 0 2px; background: rgba(255,255,255,.75); color: #333; font: 5.5px/8px "Liberation Sans", sans-serif; letter-spacing: 0; white-space: nowrap; }
.credit a { color: #0078a8; }
.desc-label { height: 24px; padding-top: 11px; }
.desc { height: 17px; padding-left: 4px; line-height: 15px; border: 1px solid #515d70; border-radius: 2px; white-space: nowrap; }
.actions { display: flex; gap: 8px; margin-top: 10px; }
.btn { flex: 1; height: 20px; line-height: 20px; text-align: center; font-weight: 600; border-radius: 3px; }
.btn-accept { background: #38a169; }
.btn-reject { background: #e03a3a; }
```
